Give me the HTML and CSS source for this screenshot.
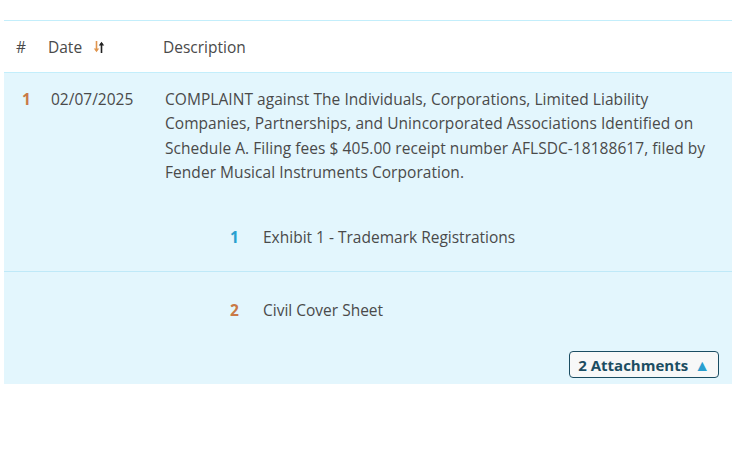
FILE: index.html
```html
<!DOCTYPE html>
<html lang="en">
<head>
  <meta charset="UTF-8" />
  <title>Docket Entries</title>
  <link rel="stylesheet" href="styles.css">
</head>
<body>
  <div class="docket">
    <div class="head">
      <div class="h-num">#</div>
      <div class="h-date">Date
        <svg class="sort" width="12" height="14" viewBox="0 0 12 14">
          <path d="M3.5 1v10" stroke="#e0954e" stroke-width="1.6"/>
          <path d="M0.8 8.6l2.7 3.6 2.7-3.6z" fill="#e0954e"/>
          <path d="M8.5 13V3" stroke="#222" stroke-width="1.6"/>
          <path d="M5.8 5.4l2.7-3.6 2.7 3.6z" fill="#222"/>
        </svg>
      </div>
      <div class="h-desc">Description</div>
    </div>

    <div class="entry">
      <div class="main">
        <div class="num orange">1</div>
        <div class="date">02/07/2025</div>
        <div class="desc">COMPLAINT against The Individuals, Corporations, Limited Liability Companies, Partnerships, and Unincorporated Associations Identified on Schedule A. Filing fees $ 405.00 receipt number AFLSDC-18188617, filed by Fender Musical Instruments Corporation.</div>
      </div>

      <div class="attach first">
        <div class="num blue">1</div>
        <div class="att-name">Exhibit 1 - Trademark Registrations</div>
      </div>
      <div class="attach second">
        <div class="num orange">2</div>
        <div class="att-name">Civil Cover Sheet</div>
      </div>

      <div class="toggle-wrap">
        <button class="toggle">2 Attachments <span class="tri">▲</span></button>
      </div>
    </div>
  </div>
</body>
</html>
```

FILE: styles.css
```css
body {
  margin: 0;
  font-family: "Open Sans", "Noto Sans", sans-serif;
  font-size: 15.5px;
  color: #4a4a4a;
  background: #fff;
}
.docket {
  margin: 20px 4px 0;
  border-top: 1px solid #c3eefb;
}
.head {
  display: grid;
  grid-template-columns: 44px 115px 1fr;
  align-items: center;
  height: 51px;
  border-bottom: 1px solid #c3eefb;
}
.h-num {
  padding-left: 12px;
}
.h-date {
  display: flex;
  align-items: center;
  gap: 11px;
}
.entry {
  background: #e3f6fd;
}
.main {
  display: grid;
  grid-template-columns: 47px 114px 1fr;
  padding: 14px 0 20px;
  line-height: 24.3px;
}
.main .num {
  padding-left: 18px;
}
.desc {
  padding-right: 8px;
  letter-spacing: 0.05px;
}
.num {
  font-weight: 700;
}
.orange {
  color: #c97a47;
}
.blue {
  color: #2a9fcf;
}
.attach {
  display: grid;
  grid-template-columns: 33px 1fr;
  padding-left: 226px;
  line-height: 24px;
}
.attach.first {
  padding-top: 21px;
  padding-bottom: 22px;
  border-bottom: 1px solid #bfe9f8;
}
.attach.second {
  padding-top: 26px;
}
.toggle-wrap {
  display: flex;
  justify-content: flex-end;
  padding: 29px 13px 6px;
}
.toggle {
  font-family: inherit;
  font-size: 15px;
  font-weight: 700;
  color: #1b4d62;
  background: #f7f8f8;
  border: 1px solid #1b4d62;
  border-radius: 4px;
  height: 27px;
  padding: 0 8px;
  display: flex;
  align-items: center;
  gap: 6px;
}
.tri {
  color: #2a9fcf;
  font-size: 16px;
}
```
